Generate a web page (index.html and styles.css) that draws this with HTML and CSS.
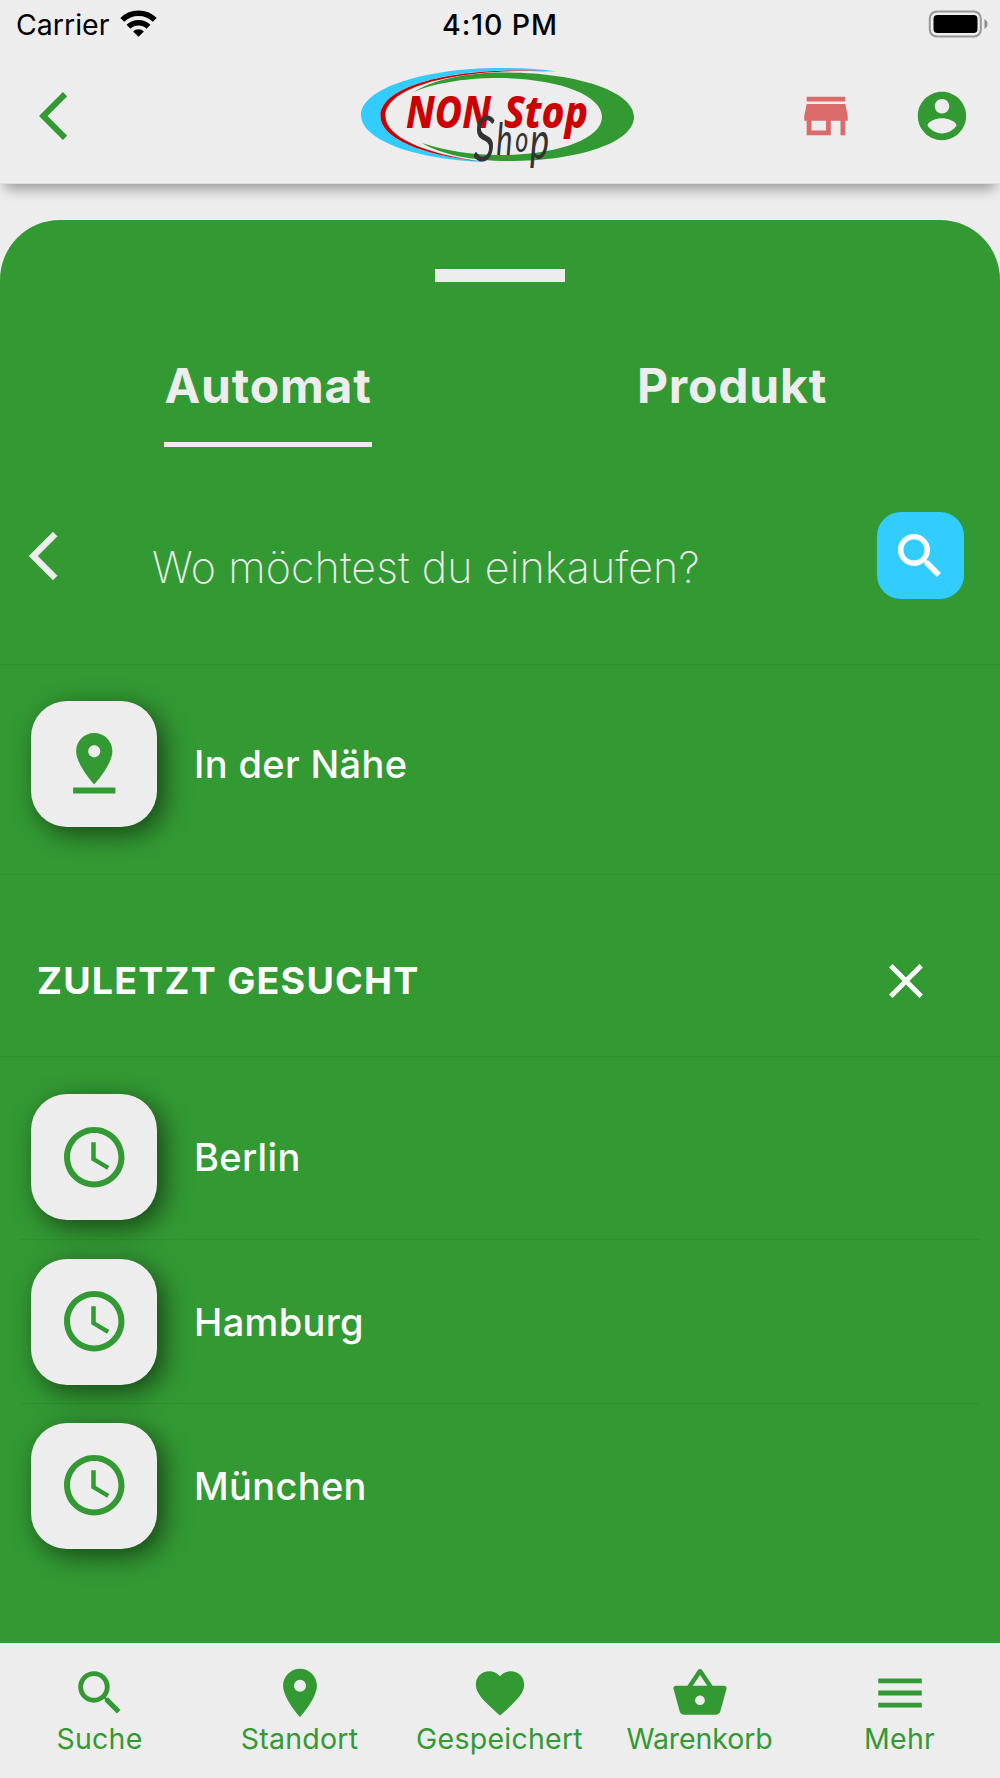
FILE: index.html
```html
<!DOCTYPE html>
<html lang="de">
<head>
<meta charset="utf-8">
<title>NON Stop Shop</title>
<link rel="stylesheet" href="styles.css">
</head>
<body>
<svg class="defs" width="0" height="0" aria-hidden="true">
  <symbol id="back" viewBox="0 0 24 24"><path d="M11.67 3.87L9.9 2.1 0 12l9.9 9.9 1.77-1.77L3.54 12z"/></symbol>
  <symbol id="search" viewBox="0 0 24 24"><path d="M15.5 14h-.79l-.28-.27A6.471 6.471 0 0 0 16 9.5 6.5 6.5 0 1 0 9.5 16c1.61 0 3.09-.59 4.23-1.57l.27.28v.79l5 4.99L20.49 19l-4.99-5zm-6 0C7.01 14 5 11.99 5 9.5S7.01 5 9.5 5 14 7.01 14 9.5 11.99 14 9.5 14z"/></symbol>
  <symbol id="clock" viewBox="0 0 24 24"><path d="M11.99 2C6.47 2 2 6.48 2 12s4.47 10 9.99 10C17.52 22 22 17.52 22 12S17.52 2 11.99 2zM12 20c-4.42 0-8-3.58-8-8s3.58-8 8-8 8 3.58 8 8-3.58 8-8 8zm.5-13H11v6l5.25 3.15.75-1.23-4.5-2.67z"/></symbol>
</svg>

<div class="app">
  <header class="topbar">
    <div class="status">
      <div class="carrier">
        <span>Carrier</span>
        <svg class="wifi" viewBox="0 0 36 27">
          <path class="wave" d="M1.8 9.9a23 23 0 0 1 32.4 0"/>
          <path class="wave" d="M8 16.8a14.2 14.2 0 0 1 20 0"/>
          <path d="M18 26.8l-5.400-5.200a7.600 7.600 0 0 1 10.800 0z"/>
        </svg>
      </div>
      <div class="time">4:10 PM</div>
      <svg class="battery" viewBox="0 0 60 28">
        <rect class="shell" x="1.8" y="1.5" width="51" height="25" rx="7"/>
        <rect x="5.5" y="5" width="44" height="18" rx="4"/>
        <path class="nub" d="M56.500 9c4 2 4 8 0 10z"/>
      </svg>
    </div>
    <div class="bar">
      <svg class="icon bar-back"><use href="#back"/></svg>
      <svg class="logo" viewBox="355 60 285 115">
        <path fill="#33ccff" d="M557 71.500C540 69 520 68 500 68C423 68 361 89 361 115C361 140 415 160 487 162L480 161C420 155 380.500 138 380.500 116C380.500 84 460 66 545 71Z"/>
        <path fill="#cc0000" d="M554 71.500C460 65.500 380.500 84 380.500 116C380.500 138 420 155 482 161.500C425 154 385.500 137 385.500 116C385.500 86 460 67.500 554 71.500Z"/>
        <path fill="#339933" d="M412 93C432 80 465 72.500 503 72.500C576 72.500 634 91 634 117C634 142 580 161 508 161C472 161 440 154 422 143C446 151 472 155 500 155C557 155 602 139 602 117C602 94 555 78 498 78C463 78 430 84 412 93Z"/>
        <text class="brand" x="406" y="127.500" textLength="85" lengthAdjust="spacingAndGlyphs">NON</text>
        <text class="brand" x="504" y="127.500" textLength="84" lengthAdjust="spacingAndGlyphs">Stop</text>
        <text class="script" transform="scale(.7 1)"><tspan x="676" y="161.500" font-size="62">S</tspan><tspan x="709" y="155.500" font-size="44">h</tspan><tspan x="736" y="152.500" font-size="36">o</tspan><tspan x="757" y="159" font-size="52">p</tspan></text>
      </svg>
      <div class="bar-actions">
        <svg class="icon store" viewBox="0 0 24 24"><path d="M20 4H4v2h16V4zm1 10v-2l-1-5H4l-1 5v2h1v6h10v-6h4v6h2v-6h1zm-9 4H6v-4h6v4z"/></svg>
        <svg class="icon" viewBox="0 0 24 24"><path d="M12 2C6.480 2 2 6.480 2 12s4.480 10 10 10 10-4.480 10-10S17.520 2 12 2zm0 3c1.660 0 3 1.340 3 3s-1.340 3-3 3-3-1.340-3-3 1.340-3 3-3zm0 14.200c-2.500 0-4.710-1.280-6-3.220.03-1.990 4-3.080 6-3.080 1.990 0 5.970 1.090 6 3.080-1.290 1.940-3.500 3.220-6 3.220z"/></svg>
      </div>
    </div>
  </header>

  <main class="sheet">
    <div class="handle"></div>
    <nav class="tabs">
      <div class="tab active">Automat</div>
      <div class="tab">Produkt</div>
    </nav>
    <div class="search">
      <svg class="icon search-back"><use href="#back"/></svg>
      <div class="placeholder">Wo möchtest du einkaufen?</div>
      <div class="search-btn"><svg class="icon"><use href="#search"/></svg></div>
    </div>
    <div class="nearby">
      <div class="tile"><svg viewBox="0 0 24 24"><path d="M18 8c0-3.310-2.690-6-6-6S6 4.690 6 8c0 4.500 6 11 6 11s6-6.500 6-11zm-8 0c0-1.100.9-2 2-2s2 .9 2 2-.89 2-2 2c-1.100 0-2-.9-2-2zM5 20v2h14v-2H5z"/></svg></div>
      <span>In der Nähe</span>
    </div>
    <div class="section">
      <h2>ZULETZT GESUCHT</h2>
      <svg class="icon" viewBox="0 0 24 24"><path d="M19 6.410L17.590 5 12 10.590 6.410 5 5 6.410 10.590 12 5 17.590 6.410 19 12 13.410 17.590 19 19 17.590 13.410 12z"/></svg>
    </div>
    <div class="recent">
      <div class="row"><div class="tile"><svg><use href="#clock"/></svg></div><span>Berlin</span></div>
      <div class="row"><div class="tile"><svg><use href="#clock"/></svg></div><span>Hamburg</span></div>
      <div class="row"><div class="tile"><svg><use href="#clock"/></svg></div><span>München</span></div>
    </div>
  </main>

  <nav class="bottom">
    <div class="item"><svg class="icon"><use href="#search"/></svg><span>Suche</span></div>
    <div class="item"><svg class="icon" viewBox="0 0 24 24"><path d="M12 2C8.130 2 5 5.130 5 9c0 5.250 7 13 7 13s7-7.750 7-13c0-3.870-3.130-7-7-7zm0 9.500a2.500 2.500 0 0 1 0-5 2.500 2.500 0 0 1 0 5z"/></svg><span>Standort</span></div>
    <div class="item"><svg class="icon" viewBox="0 0 24 24"><path d="M12 21.350l-1.450-1.320C5.400 15.360 2 12.280 2 8.500 2 5.420 4.420 3 7.500 3c1.740 0 3.410.81 4.500 2.090C13.090 3.810 14.760 3 16.500 3 19.580 3 22 5.420 22 8.500c0 3.780-3.400 6.860-8.550 11.540L12 21.350z"/></svg><span>Gespeichert</span></div>
    <div class="item"><svg class="icon" viewBox="0 0 24 24"><path d="M17.210 9l-4.380-6.560c-.19-.28-.51-.42-.83-.42-.32 0-.64.14-.83.43L6.790 9H2c-.55 0-1 .45-1 1 0 .09.01.18.04.27l2.540 9.270c.23.84 1 1.460 1.920 1.460h13c.92 0 1.690-.62 1.930-1.460l2.540-9.270L23 10c0-.55-.45-1-1-1h-4.790zM9 9l3-4.400L15 9H9zm3 8c-1.100 0-2-.9-2-2s.9-2 2-2 2 .9 2 2-.9 2-2 2z"/></svg><span class="tight">Warenkorb</span></div>
    <div class="item"><svg class="icon" viewBox="0 0 24 24"><path d="M3 18h18v-2H3v2zm0-5h18v-2H3v2zm0-7v2h18V6H3z"/></svg><span>Mehr</span></div>
  </nav>
</div>
</body>
</html>
```
FILE: styles.css
```css
* { box-sizing: border-box; }

body {
  margin: 0;
  background: #ededed;
  font-family: Inter, "Liberation Sans", sans-serif;
}

svg { display: block; flex: none; fill: currentColor; }
.defs { position: absolute; }

.app {
  width: 1000px;
  height: 1778px;
  display: flex;
  flex-direction: column;
  color: #339933;
  overflow: hidden;
}

.icon { width: 58px; height: 58px; }

/* Header */
.topbar {
  height: 184px;
  flex: none;
  background: #ededed;
  border-bottom: 1px solid #dcdcdc;
  box-shadow: 0 10px 12px -5px rgba(0, 0, 0, .36);
}

.status {
  height: 50px;
  display: grid;
  grid-template-columns: 1fr 1fr 1fr;
  align-items: center;
  padding: 0 12px 0 16px;
  font-size: 28.5px;
  line-height: 34px;
  color: #000;
}

.carrier { display: flex; gap: 11px; }
.wifi { width: 37px; height: 27px; margin-top: 2px; }
.wave { fill: none; stroke: #000; stroke-width: 5.5; }
.time { text-align: center; font-weight: 500; letter-spacing: .9px; padding-right: 4px; }
.battery { width: 60px; height: 28px; justify-self: end; margin: 0 0 2px; }
.shell { fill: none; stroke: #969696; stroke-width: 2; }
.nub { fill: #8c8c8c; }

.bar {
  height: 133px;
  display: grid;
  grid-template-columns: 1fr 285px 1fr;
  align-items: center;
  padding: 0 29px 1px 39px;
}

.logo { width: 285px; height: 115px; margin: 2px 0 0 -8px; overflow: visible; }
.brand { font: italic 800 44px "Noto Sans", sans-serif; fill: #cc0000; }
.script { font-family: Lato, sans-serif; font-style: italic; font-weight: 400; fill: #333; }
.bar-actions { display: flex; justify-content: flex-end; gap: 58px; }
.store { color: #db6b6b; }

/* Search sheet */
.sheet {
  flex: 1;
  margin-top: 36px;
  padding-top: 49px;
  border-radius: 60px 60px 0 0;
  background: #339933;
  color: #fff;
}

.handle { width: 130px; height: 13px; margin: 0 auto; background: #ededed; }

.tabs {
  height: 165px;
  display: grid;
  grid-template-columns: 1fr 1fr;
  justify-items: center;
  padding: 0 36px;
  color: #ededed;
  font-size: 48px;
  font-weight: 700;
  line-height: 58px;
  letter-spacing: .8px;
}

.tab { height: 165px; padding-top: 75px; }
.active { width: 208px; text-align: center; border-bottom: 5px solid #ededed; }

.search {
  height: 218px;
  display: flex;
  align-items: center;
  padding: 0 36px 0 29px;
  border-bottom: 1px solid #309030;
}

.search-back { color: #ededed; stroke: #ededed; stroke-width: .2; }
.placeholder {
  flex: 1;
  margin-left: 65px;
  padding-top: 22px;
  color: #ededed;
  font-size: 43px;
  font-weight: 150;
  line-height: 52px;
  letter-spacing: .1px;
}

.search-btn {
  width: 87px;
  height: 87px;
  display: grid;
  place-items: center;
  border-radius: 24px;
  background: #33ccff;
}

.search-btn .icon { margin-right: 2px; stroke: #fff; stroke-width: .3; }

.nearby, .row {
  display: flex;
  align-items: center;
  gap: 37px;
  font-size: 38px;
  font-weight: 500;
  line-height: 46px;
  letter-spacing: .35px;
}

.nearby { height: 210px; padding: 0 31px 12px; border-bottom: 1px solid #309030; }

.tile {
  width: 126px;
  height: 126px;
  display: grid;
  place-items: center;
  border-radius: 36px;
  background: #ededed;
  color: #339933;
  box-shadow: 7px 7px 26px rgba(0, 0, 0, .55);
}

.tile svg { width: 72.5px; height: 72.5px; }

.section {
  height: 182px;
  display: flex;
  align-items: center;
  justify-content: space-between;
  padding: 30px 65px 0 37px;
  border-bottom: 1px solid #309030;
}

h2 { margin: 0; font-size: 37.5px; font-weight: 700; line-height: 46px; letter-spacing: 1.25px; }

.recent { padding: 18px 20px 0; }
.row { height: 164px; padding-left: 11px; }
.row + .row { border-top: 1px solid #309030; }

/* Bottom navigation */
.bottom {
  height: 135px;
  flex: none;
  display: grid;
  grid-template-columns: repeat(5, 1fr);
  padding-top: 21px;
  font-size: 28.5px;
  line-height: 33px;
  letter-spacing: .25px;
}

.item { display: flex; flex-direction: column; align-items: center; }
.item span { margin-right: 1px; }
.tight { letter-spacing: -.1px; }
```
